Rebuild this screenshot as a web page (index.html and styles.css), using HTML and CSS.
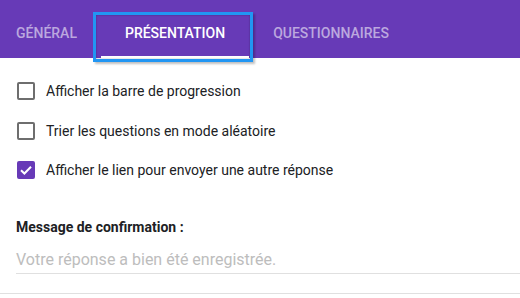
FILE: index.html
```html
<!DOCTYPE html>
<html lang="fr">
<head>
<meta charset="utf-8">
<link rel="stylesheet" href="styles.css">
</head>
<body>
<div class="header">
  <div class="tab first">Général</div>
  <div class="tab active">Présentation<span class="highlight"></span></div>
  <div class="tab">Questionnaires</div>
</div>
<div class="options">
  <div class="row"><span class="box"></span><span class="label">Afficher la barre de progression</span></div>
  <div class="row"><span class="box"></span><span class="label">Trier les questions en mode aléatoire</span></div>
  <div class="row"><span class="box checked"><svg viewBox="0 0 18 18" width="18" height="18"><path d="M4 9.2 L7.4 12.5 L14 5.8" fill="none" stroke="#fff" stroke-width="2"/></svg></span><span class="label">Afficher le lien pour envoyer une autre réponse</span></div>
</div>
<div class="confirm">
  <div class="confirm-title">Message de confirmation :</div>
  <div class="field">Votre réponse a bien été enregistrée.</div>
</div>
</body>
</html>
```
FILE: styles.css
```css
* { box-sizing: border-box; }
html, body { margin: 0; background: #fff; }
body { font-family: Roboto, "Noto Sans", sans-serif; width: 520px; height: 298px; overflow: hidden; }

.header {
  background: #673ab7;
  height: 58px;
  display: flex;
}
.tab {
  position: relative;
  height: 58px;
  padding: 23px 24px 0;
  line-height: 20px;
  font-size: 14px;
  font-weight: 500;
  text-transform: uppercase;
  color: rgba(255, 255, 255, 0.56);
}
.tab.first { padding-left: 16px; }
.tab.active {
  color: #fff;
  box-shadow: inset 0 -2px 0 #fff;
}
.highlight {
  position: absolute;
  left: -8px;
  top: 12px;
  width: 160px;
  height: 50px;
  border: 3px solid #2196f3;
  box-shadow: 2px 2px 2px rgba(0, 0, 0, 0.25), inset 0 0 2px rgba(0, 0, 0, 0.35);
}

.options { padding: 13px 0 0; }
.row {
  height: 40px;
  display: flex;
  align-items: center;
}
.row:nth-child(3) { height: 38px; }
.box {
  width: 18px;
  height: 18px;
  margin: 0 11px 0 17px;
  border: 2px solid #6e6e6e;
  border-radius: 2px;
  flex: none;
}
.box.checked {
  background: #673ab7;
  border-color: #673ab7;
}
.box.checked svg { display: block; margin: -2px; }
.label {
  font-size: 14px;
  color: #202124;
}

.confirm {
  margin-top: 28px;
  padding: 0 0 19px 16px;
  border-bottom: 1px solid #e0e0e0;
}
.confirm-title {
  font-size: 14px;
  font-weight: 700;
  line-height: 20px;
  color: #202124;
}
.field {
  margin-top: 11px;
  font-size: 16px;
  line-height: 24px;
  color: #bdbdbd;
  padding-bottom: 1px;
  border-bottom: 1px solid #e0e0e0;
}
```
